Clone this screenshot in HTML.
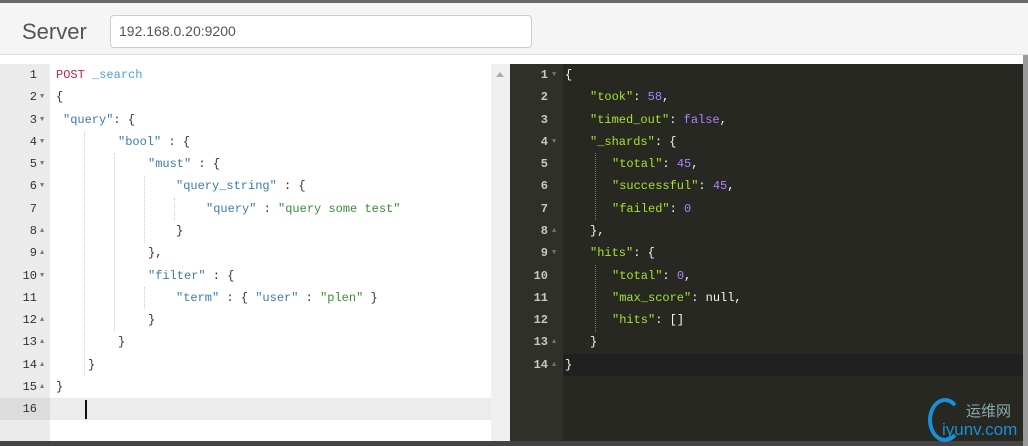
<!DOCTYPE html>
<html><head><meta charset="utf-8"><style>
*{margin:0;padding:0;box-sizing:border-box}
body{width:1028px;height:446px;overflow:hidden;background:#fff;position:relative;font-family:"Liberation Mono",monospace;font-size:12px}
.top{position:absolute;left:0;top:0;width:1028px;height:3px;background:#6a6a6a}
.bar{position:absolute;left:0;top:3px;width:1028px;height:52px;background:#f5f5f5;border-bottom:1px solid #ddd}
.srv{position:absolute;left:22px;top:16px;font-family:"Liberation Sans",sans-serif;font-size:22px;color:#555}
.inp{position:absolute;left:110px;top:12px;width:422px;height:33px;background:#fff;border:1px solid #ccc;border-radius:4px;font-family:"Liberation Sans",sans-serif;font-size:14px;color:#555;padding:7px 8px}
.lg{position:absolute;left:0;top:64px;width:50px;height:377px;background:#ebebeb}
.scr{position:absolute;left:491px;top:64px;width:19px;height:377px;background:#f0f0f0}
.rp{position:absolute;left:510px;top:64px;width:513px;height:377px;background:#272822}
.rg{position:absolute;left:510px;top:64px;width:53px;height:377px;background:#2f3129}
.bot{position:absolute;left:0;top:441px;width:1028px;height:5px;background:#444}
.edge{position:absolute;left:1023px;top:55px;width:5px;height:391px;background:#9a9a9a}
.l{position:absolute;height:22px;line-height:22px;white-space:pre}
.n{position:absolute;height:22px;line-height:22px;text-align:right;width:30px;color:#333}
.rn{color:#c8c8c2;font-weight:bold}
.ar{position:absolute;font-size:7px;line-height:22px;color:#777}
.k{color:#3c7ab0}.s{color:#3d8b37}.p{color:#333}.r{color:#c7254e}.b{color:#4fa0d8}
.K{color:#a6e22e}.N{color:#ae81ff}.P{color:#f8f8f2}
.g{position:absolute;width:0;border-left:1px dotted #ccc}
.G{position:absolute;width:0;border-left:1px dotted #777}
</style></head><body>
<div class="top"></div>
<div class="bar"><div class="srv">Server</div><div class="inp">192.168.0.20:9200</div></div>
<div class="lg"></div>
<div style="position:absolute;left:50px;top:398px;width:441px;height:22px;background:#ececec"></div>
<div style="position:absolute;left:0;top:398px;width:50px;height:22px;background:#dcdcdc"></div>
<div style="position:absolute;left:85px;top:400px;width:2px;height:19px;background:#111"></div>
<div class="scr"><div style="position:absolute;left:5px;top:8px;width:0;height:0;border-left:4px solid transparent;border-right:4px solid transparent;border-bottom:5px solid #aaa"></div></div>
<div class="rp"></div><div class="rg"></div>
<div style="position:absolute;left:563px;top:354px;width:460px;height:22px;background:#202020"></div>
<div class="bot"></div><div class="edge"></div>

<div class="g" style="left:84px;top:131px;height:245px"></div>
<div class="g" style="left:114px;top:153px;height:178px"></div>
<div class="g" style="left:144px;top:176px;height:67px"></div>
<div class="g" style="left:144px;top:287px;height:22px"></div>
<div class="g" style="left:174px;top:198px;height:22px"></div>
<div class="G" style="left:595px;top:153px;height:67px"></div>
<div class="G" style="left:595px;top:265px;height:67px"></div>

<div class="n" style="left:7px;top:64px">1</div>
<div class="n" style="left:7px;top:86px">2</div><div class="ar" style="left:40px;top:86px">▼</div>
<div class="n" style="left:7px;top:109px">3</div><div class="ar" style="left:40px;top:109px">▼</div>
<div class="n" style="left:7px;top:131px">4</div><div class="ar" style="left:40px;top:131px">▼</div>
<div class="n" style="left:7px;top:153px">5</div><div class="ar" style="left:40px;top:153px">▼</div>
<div class="n" style="left:7px;top:175px">6</div><div class="ar" style="left:40px;top:175px">▼</div>
<div class="n" style="left:7px;top:198px">7</div>
<div class="n" style="left:7px;top:220px">8</div><div class="ar" style="left:40px;top:220px">▲</div>
<div class="n" style="left:7px;top:242px">9</div><div class="ar" style="left:40px;top:242px">▲</div>
<div class="n" style="left:7px;top:265px">10</div><div class="ar" style="left:40px;top:265px">▼</div>
<div class="n" style="left:7px;top:287px">11</div>
<div class="n" style="left:7px;top:309px">12</div><div class="ar" style="left:40px;top:309px">▲</div>
<div class="n" style="left:7px;top:331px">13</div><div class="ar" style="left:40px;top:331px">▲</div>
<div class="n" style="left:7px;top:354px">14</div><div class="ar" style="left:40px;top:354px">▲</div>
<div class="n" style="left:7px;top:376px">15</div><div class="ar" style="left:40px;top:376px">▲</div>
<div class="n" style="left:7px;top:398px">16</div>

<div class="l" style="left:56px;top:64px"><span class="r">POST</span> <span class="b">_search</span></div>
<div class="l p" style="left:56px;top:86px">{</div>
<div class="l" style="left:63px;top:109px"><span class="k">"query"</span><span class="p">: {</span></div>
<div class="l" style="left:118px;top:131px"><span class="k">"bool"</span><span class="p"> : {</span></div>
<div class="l" style="left:148px;top:153px"><span class="k">"must"</span><span class="p"> : {</span></div>
<div class="l" style="left:176px;top:175px"><span class="k">"query_string"</span><span class="p"> : {</span></div>
<div class="l" style="left:206px;top:198px"><span class="k">"query"</span><span class="p"> : </span><span class="s">"query some test"</span></div>
<div class="l p" style="left:176px;top:220px">}</div>
<div class="l p" style="left:148px;top:242px">},</div>
<div class="l" style="left:148px;top:265px"><span class="k">"filter"</span><span class="p"> : {</span></div>
<div class="l" style="left:176px;top:287px"><span class="k">"term"</span><span class="p"> : { </span><span class="k">"user"</span><span class="p"> : </span><span class="s">"plen"</span><span class="p"> }</span></div>
<div class="l p" style="left:148px;top:309px">}</div>
<div class="l p" style="left:118px;top:331px">}</div>
<div class="l p" style="left:88px;top:354px">}</div>
<div class="l p" style="left:56px;top:376px">}</div>

<div class="n rn" style="left:518px;top:64px">1</div><div class="ar" style="left:552px;top:64px">▼</div>
<div class="n rn" style="left:518px;top:86px">2</div>
<div class="n rn" style="left:518px;top:109px">3</div>
<div class="n rn" style="left:518px;top:131px">4</div><div class="ar" style="left:552px;top:131px">▼</div>
<div class="n rn" style="left:518px;top:153px">5</div>
<div class="n rn" style="left:518px;top:175px">6</div>
<div class="n rn" style="left:518px;top:198px">7</div>
<div class="n rn" style="left:518px;top:220px">8</div><div class="ar" style="left:552px;top:220px">▲</div>
<div class="n rn" style="left:518px;top:242px">9</div><div class="ar" style="left:552px;top:242px">▼</div>
<div class="n rn" style="left:518px;top:265px">10</div>
<div class="n rn" style="left:518px;top:287px">11</div>
<div class="n rn" style="left:518px;top:309px">12</div>
<div class="n rn" style="left:518px;top:331px">13</div><div class="ar" style="left:552px;top:331px">▲</div>
<div class="n rn" style="left:518px;top:354px">14</div><div class="ar" style="left:552px;top:354px">▲</div>

<div class="l P" style="left:565px;top:64px">{</div>
<div class="l" style="left:590px;top:86px"><span class="K">"took"</span><span class="P">: </span><span class="N">58</span><span class="P">,</span></div>
<div class="l" style="left:590px;top:109px"><span class="K">"timed_out"</span><span class="P">: </span><span class="N">false</span><span class="P">,</span></div>
<div class="l" style="left:590px;top:131px"><span class="K">"_shards"</span><span class="P">: {</span></div>
<div class="l" style="left:612px;top:153px"><span class="K">"total"</span><span class="P">: </span><span class="N">45</span><span class="P">,</span></div>
<div class="l" style="left:612px;top:175px"><span class="K">"successful"</span><span class="P">: </span><span class="N">45</span><span class="P">,</span></div>
<div class="l" style="left:612px;top:198px"><span class="K">"failed"</span><span class="P">: </span><span class="N">0</span></div>
<div class="l P" style="left:590px;top:220px">},</div>
<div class="l" style="left:590px;top:242px"><span class="K">"hits"</span><span class="P">: {</span></div>
<div class="l" style="left:612px;top:265px"><span class="K">"total"</span><span class="P">: </span><span class="N">0</span><span class="P">,</span></div>
<div class="l" style="left:612px;top:287px"><span class="K">"max_score"</span><span class="P">: null,</span></div>
<div class="l" style="left:612px;top:309px"><span class="K">"hits"</span><span class="P">: []</span></div>
<div class="l P" style="left:590px;top:331px">}</div>
<div class="l P" style="left:565px;top:354px">}</div>

<div style="position:absolute;left:928px;top:398px;width:34px;height:44px;border:4px solid #1a8fd6;border-right-color:transparent;border-radius:50%"></div>
<div style="position:absolute;left:966px;top:400px;font-family:'Liberation Sans','Noto Sans CJK SC',sans-serif;font-size:15px;color:#8aa"><span>运维网</span></div>
<div style="position:absolute;left:942px;top:420px;font-family:'Liberation Sans',sans-serif;font-size:17px;color:#1a8fd6">iyunv.com</div>
</body></html>
